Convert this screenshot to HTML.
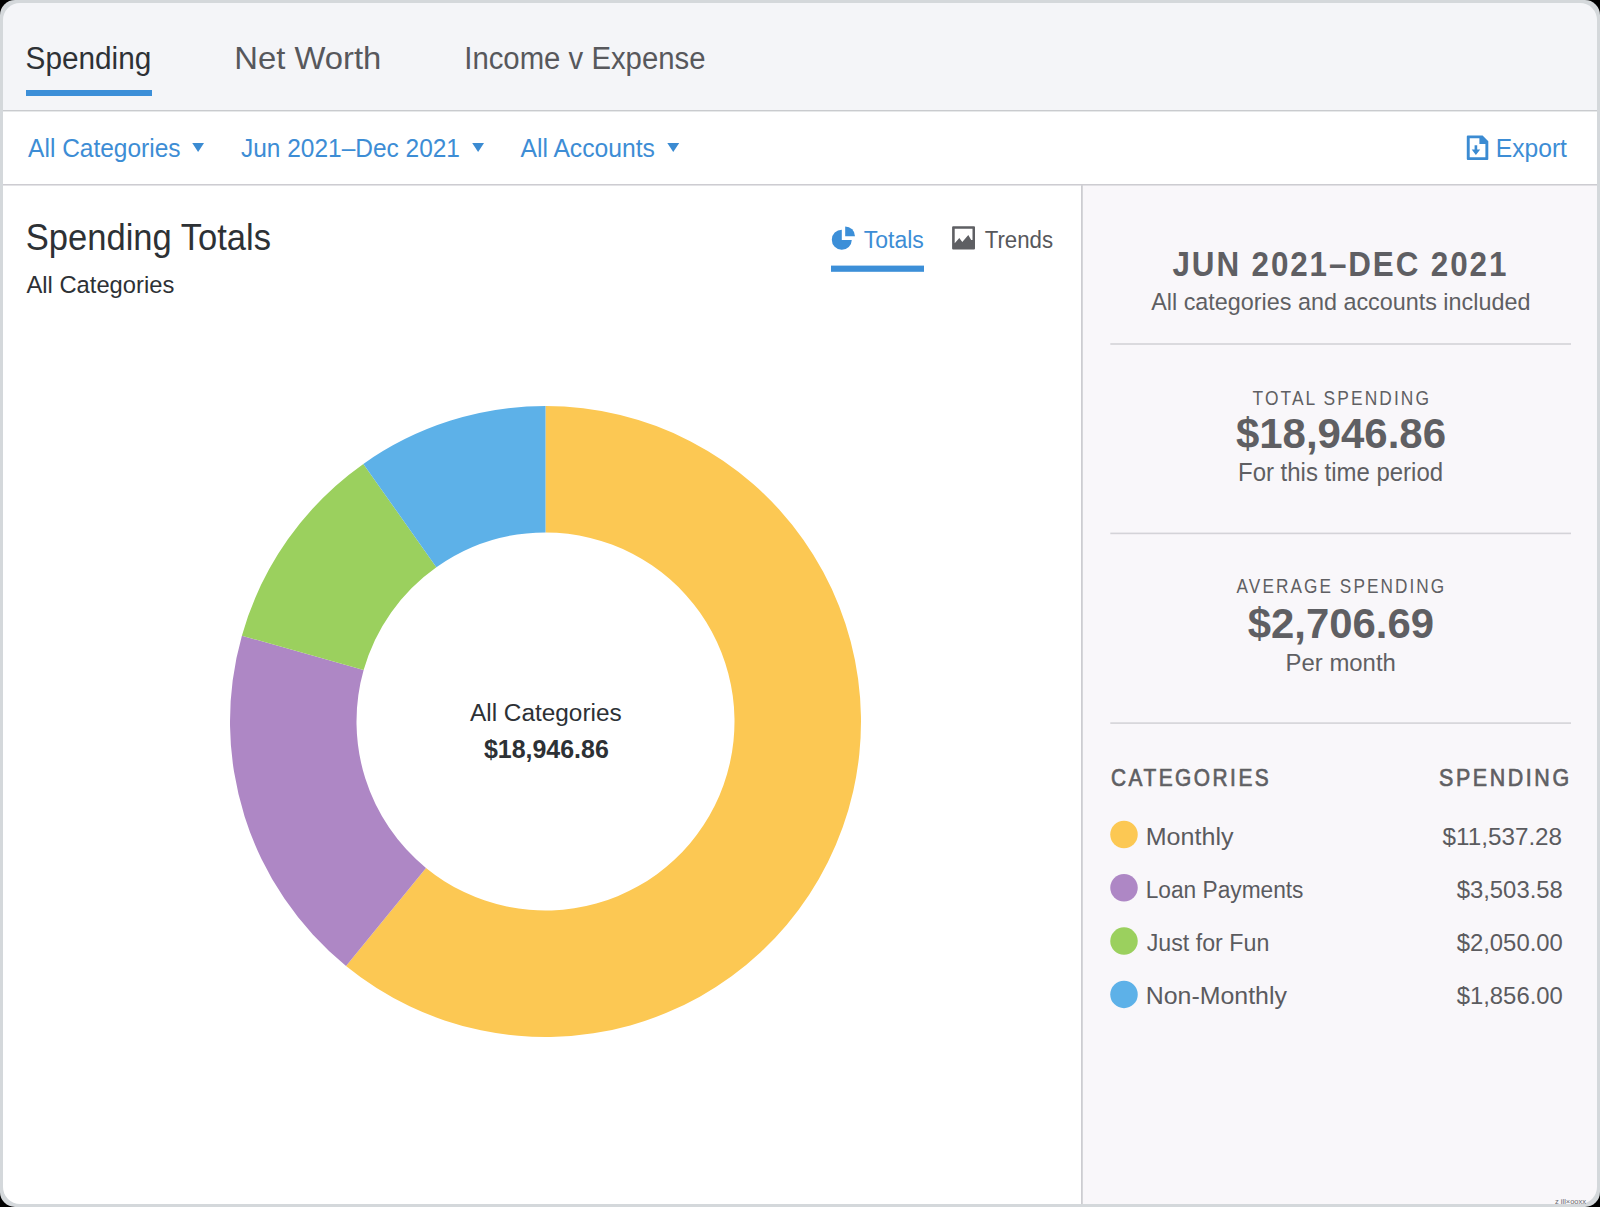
<!DOCTYPE html>
<html><head><meta charset="utf-8"><title>Spending Totals</title>
<style>html,body{margin:0;padding:0;background:#000;width:1600px;height:1207px;overflow:hidden}
svg{display:block;font-family:"Liberation Sans",sans-serif}</style></head>
<body>
<svg width="1600" height="1207" viewBox="0 0 1600 1207">
<defs><clipPath id="inner"><rect x="3" y="3" width="1594" height="1201" rx="17" ry="17"/></clipPath></defs>
<rect x="0" y="0" width="1600" height="1207" fill="#000"/>
<rect x="0" y="0" width="1600" height="1207" rx="15" ry="15" fill="#d4d8db"/>
<g clip-path="url(#inner)">
<rect x="0" y="0" width="1600" height="111" fill="#f4f5f8"/>
<rect x="0" y="110" width="1600" height="1.5" fill="#c9cbce"/>
<rect x="0" y="111.5" width="1600" height="72.5" fill="#ffffff"/>
<rect x="0" y="184" width="1600" height="1.6" fill="#cdccd1"/>
<rect x="0" y="185.6" width="1081" height="1030" fill="#ffffff"/>
<rect x="1081" y="185.6" width="1.8" height="1030" fill="#cdccd1"/>
<rect x="1082.8" y="185.6" width="520" height="1030" fill="#f9f7fa"/>
</g>
<rect x="26" y="90" width="126" height="6" fill="#3c8fd8"/>
<path d="M192.25 143.10 L204.00 143.10 L198.12 151.90 Z" fill="#3b8bd2"/><path d="M472.20 143.10 L484.00 143.10 L478.10 151.90 Z" fill="#3b8bd2"/><path d="M667.30 143.10 L679.20 143.10 L673.25 151.90 Z" fill="#3b8bd2"/>
<path fill="#3b8bd2" fill-rule="evenodd" d="M1467.8 135.4 H1482.6 L1488.3 141.3 V158.9 Q1488.3 159.9 1487.3 159.9 H1467.8 Q1466.8 159.9 1466.8 158.9 V136.4 Q1466.8 135.4 1467.8 135.4 Z M1469.7 138.2 V157.2 H1485.4 V144.1 H1479.4 V138.2 Z"/>
<path fill="#3b8bd2" d="M1474.6 145.2 H1477.2 V149.6 H1480.2 L1475.9 155 L1471.7 149.6 H1474.6 Z"/>
<path fill="#3c8fd8" d="M841.8 229.7 V239.9 H851.8 A10 10 0 1 1 841.8 229.7 Z"/>
<path fill="#3c8fd8" d="M845.2 226.4 A9.8 9.8 0 0 1 855 236.2 H845.2 Z"/>
<rect x="831" y="265.6" width="93" height="6.2" fill="#3c8fd8"/>
<path fill="#5e5f63" fill-rule="evenodd" d="M953.1 226.2 H974 Q975 226.2 975 227.2 V248.6 Q975 249.6 974 249.6 H953.1 Q952.1 249.6 952.1 248.6 V227.2 Q952.1 226.2 953.1 226.2 Z M954.7 228.8 V243.2 L959.3 238.1 L962.3 242 L968.3 235 L971.2 240 H972.5 V228.8 Z"/>
<path d="M545.50 406.00 A315.50 315.50 0 1 1 346.03 965.95 L426.01 867.93 A189.00 189.00 0 1 0 545.50 532.50 Z" fill="#fcc853"/>
<path d="M346.03 965.95 A315.50 315.50 0 0 1 241.90 635.68 L363.63 670.09 A189.00 189.00 0 0 0 426.01 867.93 Z" fill="#ae87c5"/>
<path d="M241.90 635.68 A315.50 315.50 0 0 1 363.34 463.90 L436.38 567.18 A189.00 189.00 0 0 0 363.63 670.09 Z" fill="#9bd05e"/>
<path d="M363.34 463.90 A315.50 315.50 0 0 1 545.50 406.00 L545.50 532.50 A189.00 189.00 0 0 0 436.38 567.18 Z" fill="#5db1e8"/>
<rect x="1110.3" y="343.2" width="460.7" height="1.6" fill="#d4d3d8"/>
<rect x="1110.3" y="532.6" width="460.7" height="1.6" fill="#d4d3d8"/>
<rect x="1110.3" y="722.3" width="460.7" height="1.6" fill="#d4d3d8"/>
<circle cx="1124" cy="834.50" r="13.75" fill="#fcc853"/>
<circle cx="1124" cy="887.80" r="13.75" fill="#ae87c5"/>
<circle cx="1124" cy="941.10" r="13.75" fill="#9bd05e"/>
<circle cx="1124" cy="994.40" r="13.75" fill="#5db1e8"/>
<text x="25.600" y="68.600" font-size="32.268" font-weight="400" fill="#2d3135" textLength="125.723" lengthAdjust="spacingAndGlyphs">Spending</text>
<text x="234.300" y="68.800" font-size="32.195" font-weight="400" fill="#57585c" textLength="146.959" lengthAdjust="spacingAndGlyphs">Net Worth</text>
<text x="464.250" y="68.800" font-size="32.268" font-weight="400" fill="#57585c" textLength="241.263" lengthAdjust="spacingAndGlyphs">Income v Expense</text>
<text x="28.100" y="156.900" font-size="26.018" font-weight="400" fill="#3d8dd5" textLength="152.510" lengthAdjust="spacingAndGlyphs">All Categories</text>
<text x="241.000" y="156.600" font-size="25.873" font-weight="400" fill="#3d8dd5" textLength="218.974" lengthAdjust="spacingAndGlyphs">Jun 2021–Dec 2021</text>
<text x="520.500" y="156.900" font-size="26.018" font-weight="400" fill="#3d8dd5" textLength="134.411" lengthAdjust="spacingAndGlyphs">All Accounts</text>
<text x="1495.800" y="156.500" font-size="25.436" font-weight="400" fill="#3d8dd5" textLength="71.170" lengthAdjust="spacingAndGlyphs">Export</text>
<text x="25.800" y="249.900" font-size="37.065" font-weight="400" fill="#2d3135" textLength="245.125" lengthAdjust="spacingAndGlyphs">Spending Totals</text>
<text x="26.500" y="292.700" font-size="23.692" font-weight="400" fill="#2d3135" textLength="147.770" lengthAdjust="spacingAndGlyphs">All Categories</text>
<text x="863.750" y="247.800" font-size="24.564" font-weight="400" fill="#3d8dd5" textLength="60.117" lengthAdjust="spacingAndGlyphs">Totals</text>
<text x="984.700" y="247.800" font-size="24.564" font-weight="400" fill="#57585c" textLength="68.358" lengthAdjust="spacingAndGlyphs">Trends</text>
<text x="470.000" y="720.600" font-size="24.128" font-weight="400" fill="#2d3135" textLength="151.696" lengthAdjust="spacingAndGlyphs">All Categories</text>
<text x="483.900" y="758.200" font-size="25.582" font-weight="700" fill="#2d3135" textLength="124.917" lengthAdjust="spacingAndGlyphs">$18,946.86</text>
<text x="1172.500" y="275.500" font-size="35.248" font-weight="700" fill="#5f5f63" textLength="335.729" lengthAdjust="spacingAndGlyphs" letter-spacing="2.115">JUN 2021–DEC 2021</text>
<text x="1151.250" y="310.000" font-size="24.346" font-weight="400" fill="#5f5f63" textLength="379.121" lengthAdjust="spacingAndGlyphs">All categories and accounts included</text>
<text x="1252.500" y="405.000" font-size="19.986" font-weight="400" fill="#5f5f63" textLength="178.576" lengthAdjust="spacingAndGlyphs" letter-spacing="2.398">TOTAL SPENDING</text>
<text x="1235.900" y="448.000" font-size="43.169" font-weight="700" fill="#5f5f63" textLength="210.174" lengthAdjust="spacingAndGlyphs">$18,946.86</text>
<text x="1238.000" y="481.000" font-size="25.073" font-weight="400" fill="#5f5f63" textLength="205.034" lengthAdjust="spacingAndGlyphs">For this time period</text>
<text x="1236.600" y="593.400" font-size="20.349" font-weight="400" fill="#5f5f63" textLength="209.726" lengthAdjust="spacingAndGlyphs" letter-spacing="2.442">AVERAGE SPENDING</text>
<text x="1247.800" y="637.800" font-size="42.588" font-weight="700" fill="#5f5f63" textLength="186.270" lengthAdjust="spacingAndGlyphs">$2,706.69</text>
<text x="1285.600" y="670.600" font-size="24.492" font-weight="400" fill="#5f5f63" textLength="110.221" lengthAdjust="spacingAndGlyphs">Per month</text>
<text x="1111.000" y="785.900" font-size="24.419" font-weight="400" fill="#5f5f63" textLength="160.256" lengthAdjust="spacingAndGlyphs" letter-spacing="2.930" stroke="#5f5f63" stroke-width="0.70">CATEGORIES</text>
<text x="1439.000" y="785.900" font-size="24.419" font-weight="400" fill="#5f5f63" textLength="132.700" lengthAdjust="spacingAndGlyphs" letter-spacing="2.930" stroke="#5f5f63" stroke-width="0.70">SPENDING</text>
<text x="1145.750" y="844.800" font-size="24.564" font-weight="400" fill="#5b5b5f" textLength="87.728" lengthAdjust="spacingAndGlyphs">Monthly</text>
<text x="1442.500" y="844.500" font-size="23.838" font-weight="400" fill="#5b5b5f" textLength="119.611" lengthAdjust="spacingAndGlyphs">$11,537.28</text>
<text x="1145.750" y="897.700" font-size="23.983" font-weight="400" fill="#5b5b5f" textLength="157.731" lengthAdjust="spacingAndGlyphs">Loan Payments</text>
<text x="1456.700" y="897.700" font-size="23.983" font-weight="400" fill="#5b5b5f" textLength="106.140" lengthAdjust="spacingAndGlyphs">$3,503.58</text>
<text x="1146.750" y="951.000" font-size="23.983" font-weight="400" fill="#5b5b5f" textLength="122.545" lengthAdjust="spacingAndGlyphs">Just for Fun</text>
<text x="1456.700" y="951.000" font-size="23.983" font-weight="400" fill="#5b5b5f" textLength="106.140" lengthAdjust="spacingAndGlyphs">$2,050.00</text>
<text x="1145.750" y="1004.300" font-size="23.983" font-weight="400" fill="#5b5b5f" textLength="141.177" lengthAdjust="spacingAndGlyphs">Non-Monthly</text>
<text x="1456.700" y="1004.300" font-size="23.983" font-weight="400" fill="#5b5b5f" textLength="106.140" lengthAdjust="spacingAndGlyphs">$1,856.00</text>
<text x="1555" y="1204" font-size="8" fill="#6a6a6e" textLength="31" lengthAdjust="spacingAndGlyphs">z ill×ooxx</text>
</svg>
</body></html>
